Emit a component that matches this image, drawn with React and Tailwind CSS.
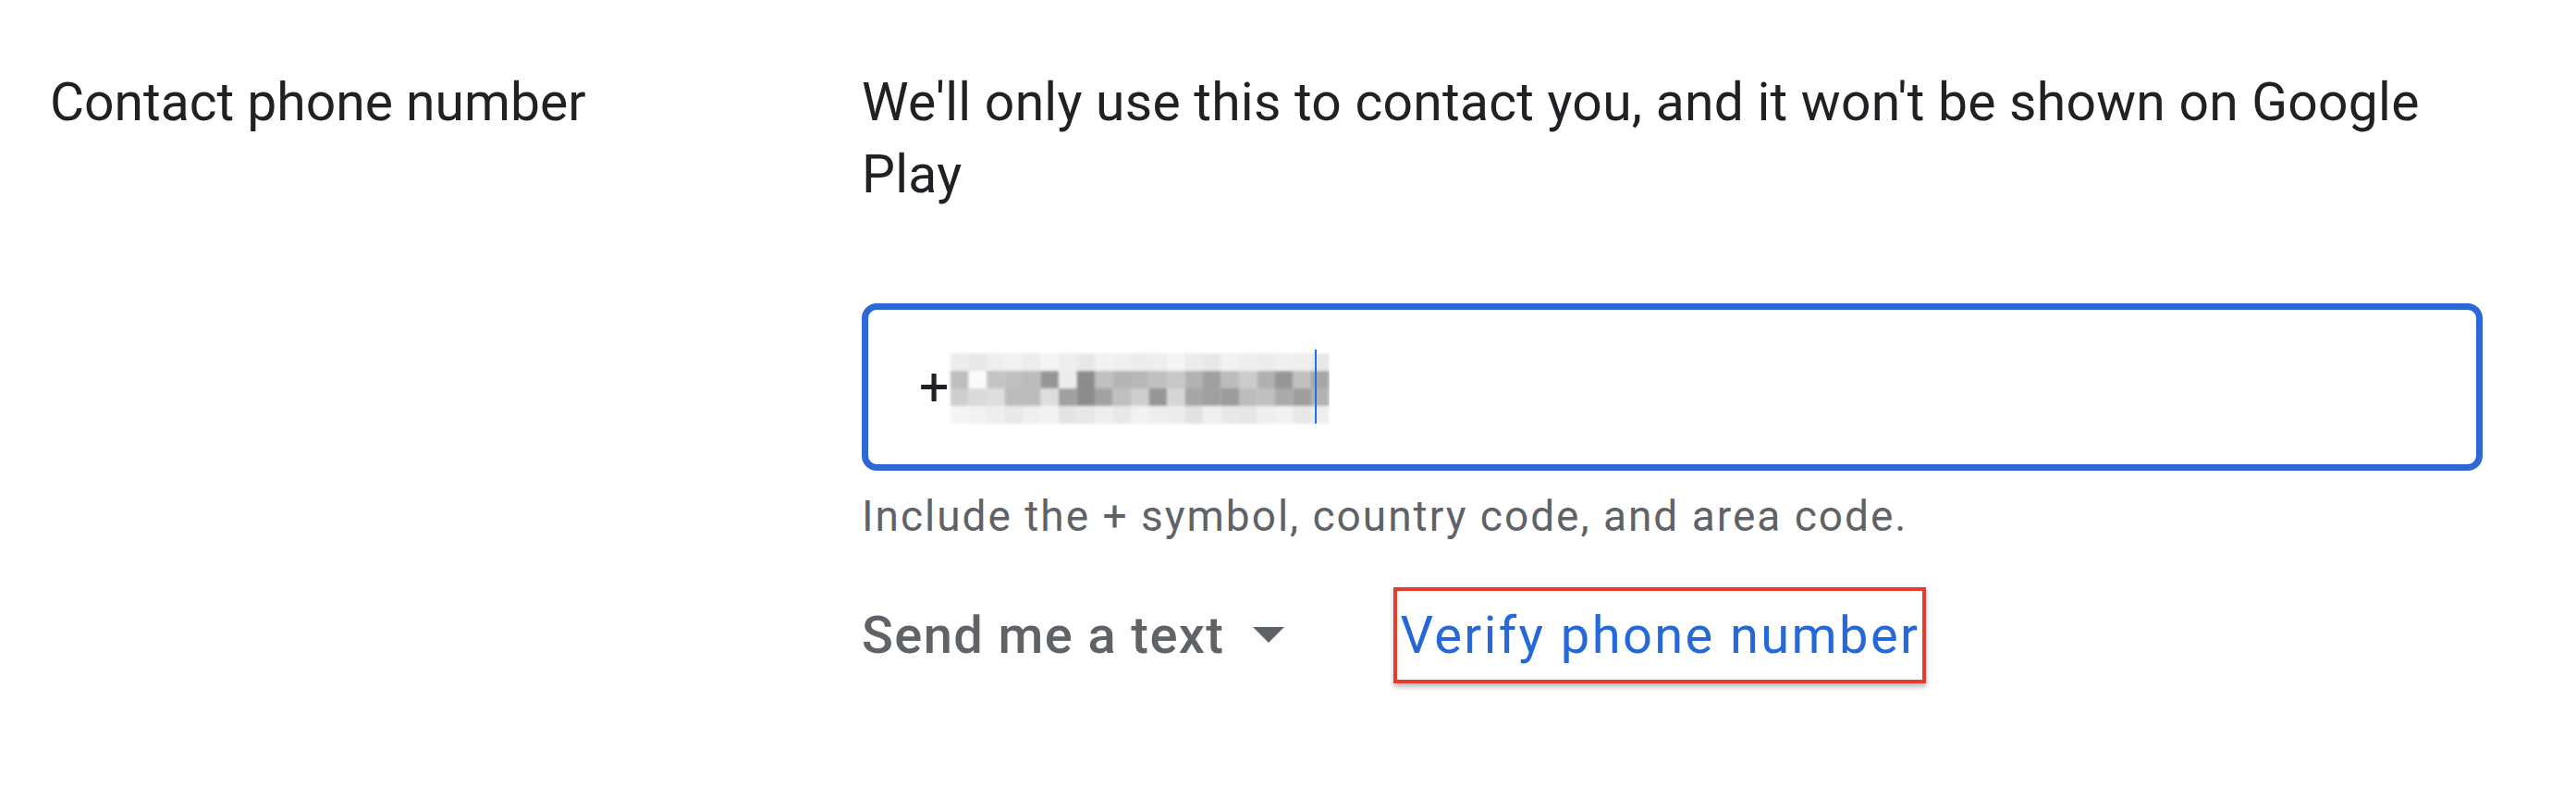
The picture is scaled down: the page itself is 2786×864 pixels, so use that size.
import { memo } from 'react'

// redacted phone digits, drawn as a blurred mosaic
const MOSAIC = [
    [236, 232, 238, 242, 236, 244, 238, 232, 242, 240, 236, 238, 244, 236, 232, 242, 238, 236, 240, 238, 232],
    [190, 250, 196, 192, 188, 150, 236, 140, 192, 180, 184, 192, 200, 178, 160, 188, 204, 176, 150, 192, 166],
    [206, 218, 222, 188, 188, 222, 160, 140, 162, 192, 206, 150, 214, 166, 160, 156, 188, 192, 170, 158, 178],
    [244, 242, 238, 232, 240, 242, 228, 232, 238, 232, 242, 238, 236, 226, 240, 232, 230, 238, 242, 232, 238],
]

function Mosaic() {
    return (
        <svg width="414" height="86" viewBox="0 0 414 86" className="shrink-0">
            <defs>
                <filter id="soft" x="-5%" y="-20%" width="110%" height="140%">
                    <feGaussianBlur stdDeviation="1.6" />
                </filter>
            </defs>
            <g filter="url(#soft)">
                {MOSAIC.map((row, r) =>
                    row.map((v, c) => (
                        <rect
                            key={r + '-' + c}
                            x={4 + c * 19.5}
                            y={6 + r * 19}
                            width="19.6"
                            height="19.2"
                            fill={`rgb(${v},${v},${v})`}
                        />
                    ))
                )}
            </g>
        </svg>
    )
}

function PhoneSection() {
    return (
        <div className="min-h-[864px] w-full bg-white font-['Roboto','Liberation_Sans',sans-serif] text-[#202124]">
            <div className="flex pt-[72px]">
                <div className="w-[932px] shrink-0 pl-[54px] text-[57px] leading-[78px]">
                    Contact phone number
                </div>
                <div className="w-[1753px] shrink-0">
                    <p className="text-[57px] leading-[78px] tracking-[0.25px]">
                        We'll only use this to contact you, and it won't be shown on Google Play
                    </p>

                    <div className="mt-[100px] flex h-[181px] items-center rounded-[16px] border-[7px] border-[#2c68d8] pl-[55px]">
                        <span className="text-[57px] leading-[78px]">+</span>
                        <div className="relative -ml-[2px] flex items-center">
                            <Mosaic />
                            <span className="absolute left-[398px] top-[2px] h-[80px] w-[2px] bg-[#1a73e8]" />
                        </div>
                    </div>

                    <p className="mt-[19px] text-[46px] leading-[60px] tracking-[2px] text-[#5f6368]">
                        Include the + symbol, country code, and area code.
                    </p>

                    <div className="mt-[47px] flex items-center">
                        <button className="flex items-center text-[56px] font-medium leading-[78px] tracking-[1.4px] text-[#5f6368]">
                            Send me a text
                            <svg width="34" height="18" viewBox="0 0 34 18" className="ml-[31px]">
                                <path d="M0 0 L34 0 L17 17 Z" fill="#5f6368" />
                            </svg>
                        </button>
                        <div className="ml-[118px] border-[4px] border-[#e53d2b] px-[3px] py-[9px] shadow-[0_4px_5px_rgba(0,0,0,0.25)]">
                            <span className="text-[56px] leading-[78px] tracking-[2.4px] text-[#2468d9]">
                                Verify phone number
                            </span>
                        </div>
                    </div>
                </div>
            </div>
        </div>
    )
}

export default memo(PhoneSection)
